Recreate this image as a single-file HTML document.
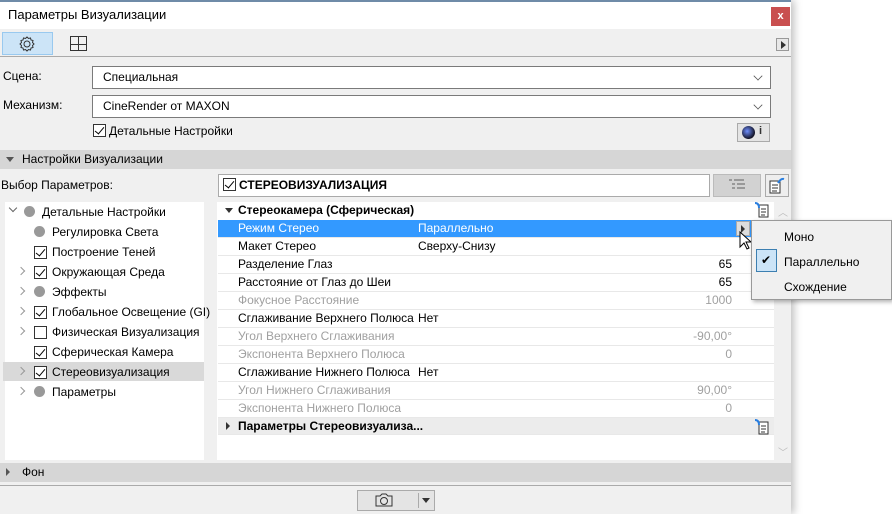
<!DOCTYPE html>
<html><head><meta charset="utf-8"><style>
*{box-sizing:border-box;margin:0;padding:0}
body{width:892px;height:514px;background:#fff;font-family:"Liberation Sans",sans-serif;font-size:12px;color:#000;position:relative;overflow:hidden}
.a{position:absolute}
.dlg{left:0;top:0;width:791px;height:514px;background:#f0f0f0;box-shadow:3px 0 8px rgba(0,0,0,.25)}
.combo{background:#fff;border:1px solid #7a7a7a;height:23px;padding:4px 10px}
.chev{position:absolute;right:8px;top:5px;width:8px;height:8px;border-right:1.3px solid #555;border-bottom:1.3px solid #555;transform:rotate(45deg) scale(.8)}
.cb{width:13px;height:13px;border:1px solid #333;background:#fff;position:absolute}
.cb.k::after{content:"";position:absolute;left:3px;top:0px;width:4px;height:8px;border-right:1.6px solid #000;border-bottom:1.6px solid #000;transform:rotate(40deg)}
.dot{width:11px;height:11px;border-radius:50%;background:#999;position:absolute}
.arr{position:absolute;width:6px;height:6px;border-right:1.3px solid #999;border-bottom:1.3px solid #999;transform:rotate(-45deg)}
.row{position:absolute;left:218px;width:556px;height:18px;border-bottom:1px solid #e8e8e8;padding:1px 0 0 20px;white-space:nowrap}
.g{color:#a0a0a0}
.v{position:absolute;left:200px;top:1px}
.n{position:absolute;right:42px;top:1px}
.t{position:absolute;white-space:nowrap}
</style></head><body>
<div class="a dlg">
 <div class="a" style="left:0;top:0;width:791px;height:29px;background:#fff;border-top:2px solid #6f8ba8"></div>
 <div class="t" style="left:8px;top:7px;font-size:13px">Параметры Визуализации</div>
 <div class="a" style="left:771px;top:7px;width:19px;height:19px;background:#c94f4f;color:#fff;font-weight:bold;font-size:11px;text-align:center;line-height:18px">x</div>
 <div class="a" style="left:2px;top:32px;width:51px;height:23px;background:#cce4f7;border:1px solid #99c9ef"></div>
 <svg class="a" style="left:18px;top:35px" width="18" height="18" viewBox="0 0 18 18"><circle cx="9" cy="9" r="3" fill="none" stroke="#333"/><path d="M9 2l1.5 1.5 2-.5.5 2 2 .5-.5 2L16 9l-1.5 1.5.5 2-2 .5-.5 2-2-.5L9 16l-1.5-1.5-2 .5-.5-2-2-.5.5-2L2 9l1.5-1.5-.5-2 2-.5.5-2 2 .5z" fill="none" stroke="#333"/></svg>
 <svg class="a" style="left:70px;top:36px" width="17" height="15"><rect x=".5" y=".5" width="16" height="14" fill="none" stroke="#333"/><path d="M8.5 1v13M1 8.5h15" stroke="#333"/></svg>
 <div class="a" style="left:776px;top:38px;width:13px;height:13px;border:1px solid #999;background:#e8e8e8"></div>
 <div class="a" style="left:781px;top:41px;border-left:5px solid #333;border-top:4px solid transparent;border-bottom:4px solid transparent"></div>
 <div class="a" style="left:0;top:56px;width:791px;height:1px;background:#aaa"></div>
 <div class="t" style="left:3px;top:69px">Сцена:</div>
 <div class="a combo" style="left:92px;top:66px;width:679px;padding-top:3px">Специальная<span class="chev"></span></div>
 <div class="t" style="left:3px;top:98px">Механизм:</div>
 <div class="a combo" style="left:92px;top:95px;width:679px;padding-top:3px">CineRender от MAXON<span class="chev"></span></div>
 <div class="cb k" style="left:93px;top:124px"></div>
 <div class="t" style="left:109px;top:124px">Детальные Настройки</div>
 <div class="a" style="left:737px;top:123px;width:33px;height:19px;border:1px solid #aaa;background:#e4e4e4"></div>
 <div class="a" style="left:742px;top:126px;width:13px;height:13px;border-radius:50%;background:radial-gradient(circle at 40% 40%,#6f8fff,#112 70%,#aaa)"></div>
 <div class="t" style="left:759px;top:125px;font-weight:bold;font-size:11px;color:#333">i</div>
 <div class="a" style="left:0;top:150px;width:791px;height:19px;background:#d6d6d6"></div>
 <div class="a" style="left:6px;top:157px;border-top:5px solid #555;border-left:4px solid transparent;border-right:4px solid transparent"></div>
 <div class="t" style="left:22px;top:152px">Настройки Визуализации</div>
 <div class="t" style="left:1px;top:178px">Выбор Параметров:</div>
 <div class="a" style="left:218px;top:174px;width:492px;height:23px;background:#fff;border:1px solid #aaa"></div>
 <div class="cb k" style="left:223px;top:178px"></div>
 <div class="t" style="left:239px;top:178px;font-weight:bold">СТЕРЕОВИЗУАЛИЗАЦИЯ</div>
 <div class="a" style="left:713px;top:174px;width:48px;height:23px;background:#d2d2d2;border:1px solid #bbb"></div>
 <svg class="a" style="left:728px;top:179px" width="18" height="13"><path d="M1 1h3M6 1h10M4 5h3M9 5h8M4 9h3M9 9h8" stroke="#999" stroke-width="2"/></svg>
 <div class="a" style="left:765px;top:174px;width:24px;height:23px;background:#eee;border:1px solid #aaa"></div>
 <svg class="a" style="left:768px;top:176px" width="18" height="18"><rect x="2" y="5" width="10" height="12" fill="#fff" stroke="#333"/><path d="M4 9h6M4 12h6M4 15h5" stroke="#333"/><path d="M10 7q3-5 6-4" stroke="#2a7fe0" stroke-width="2" fill="none"/></svg>
 <div class="a" style="left:5px;top:202px;width:199px;height:258px;background:#fff"></div>
 <div class="a" style="left:3px;top:362px;width:201px;height:19px;background:#d9d9d9"></div>
 <div class="a" style="left:10px;top:205px;width:6px;height:6px;border-right:1.3px solid #666;border-bottom:1.3px solid #666;transform:rotate(45deg)"></div>
 <div class="dot" style="left:24px;top:206px"></div><div class="t" style="left:42px;top:205px">Детальные Настройки</div>
 <div class="dot" style="left:34px;top:226px"></div><div class="t" style="left:52px;top:225px">Регулировка Света</div>
 <div class="cb k" style="left:34px;top:246px"></div><div class="t" style="left:52px;top:245px">Построение Теней</div>
 <div class="arr" style="left:18px;top:268px"></div><div class="cb k" style="left:34px;top:266px"></div><div class="t" style="left:52px;top:265px">Окружающая Среда</div>
 <div class="arr" style="left:18px;top:288px"></div><div class="dot" style="left:34px;top:286px"></div><div class="t" style="left:52px;top:285px">Эффекты</div>
 <div class="arr" style="left:18px;top:308px"></div><div class="cb k" style="left:34px;top:306px"></div><div class="t" style="left:52px;top:305px">Глобальное Освещение (GI)</div>
 <div class="arr" style="left:18px;top:328px"></div><div class="cb" style="left:34px;top:326px"></div><div class="t" style="left:52px;top:325px">Физическая Визуализация</div>
 <div class="cb k" style="left:34px;top:346px"></div><div class="t" style="left:52px;top:345px">Сферическая Камера</div>
 <div class="arr" style="left:18px;top:368px"></div><div class="cb k" style="left:34px;top:366px"></div><div class="t" style="left:52px;top:365px">Стереовизуализация</div>
 <div class="arr" style="left:18px;top:388px"></div><div class="dot" style="left:34px;top:386px"></div><div class="t" style="left:52px;top:385px">Параметры</div>
 <div class="a" style="left:217px;top:202px;width:574px;height:258px;background:#fff"></div>
 <div class="a" style="left:774px;top:202px;width:17px;height:258px;background:#f0f0f0"></div>
 <div class="row" style="top:202px;font-weight:bold;border:0">Стереокамера (Сферическая)</div>
 <div class="a" style="left:225px;top:208px;border-top:5px solid #333;border-left:4px solid transparent;border-right:4px solid transparent"></div>
 <div class="row" style="top:220px;background:#3399ff;color:#fff">Режим Стерео<span class="v">Параллельно</span></div>
 <div class="a" style="left:736px;top:221px;width:14px;height:15px;background:#ddd;border:1px solid #aaa"></div>
 <div class="a" style="left:741px;top:225px;border-left:4px solid #333;border-top:4px solid transparent;border-bottom:4px solid transparent"></div>
 <div class="row" style="top:238px">Макет Стерео<span class="v">Сверху-Снизу</span></div>
 <div class="row" style="top:256px">Разделение Глаз<span class="n">65</span></div>
 <div class="row" style="top:274px">Расстояние от Глаз до Шеи<span class="n">65</span></div>
 <div class="row g" style="top:292px">Фокусное Расстояние<span class="n">1000</span></div>
 <div class="row" style="top:310px">Сглаживание Верхнего Полюса<span class="v">Нет</span></div>
 <div class="row g" style="top:328px">Угол Верхнего Сглаживания<span class="n">-90,00°</span></div>
 <div class="row g" style="top:346px">Экспонента Верхнего Полюса<span class="n">0</span></div>
 <div class="row" style="top:364px">Сглаживание Нижнего Полюса<span class="v">Нет</span></div>
 <div class="row g" style="top:382px">Угол Нижнего Сглаживания<span class="n">90,00°</span></div>
 <div class="row g" style="top:400px">Экспонента Нижнего Полюса<span class="n">0</span></div>
 <div class="row" style="top:418px;background:#ececec;font-weight:bold;height:17px">Параметры Стереовизуализа...</div>
 <div class="a" style="left:226px;top:422px;border-left:4px solid #333;border-top:4px solid transparent;border-bottom:4px solid transparent"></div>
 <svg class="a" style="left:754px;top:201px" width="16" height="17"><rect x="5" y="4" width="9" height="12" fill="#fff" stroke="#333"/><path d="M7 8h5M7 11h5M7 14h4" stroke="#333"/><path d="M1 2q4 0 4 5" stroke="#2a7fe0" stroke-width="2" fill="none"/></svg>
 <svg class="a" style="left:754px;top:418px" width="16" height="17"><rect x="5" y="4" width="9" height="12" fill="#fff" stroke="#333"/><path d="M7 8h5M7 11h5M7 14h4" stroke="#333"/><path d="M1 2q4 0 4 5" stroke="#2a7fe0" stroke-width="2" fill="none"/></svg>
 <div class="t" style="left:778px;top:204px;color:#bbb;font-size:10px">︿</div>
 <div class="t" style="left:778px;top:444px;color:#bbb;font-size:10px">﹀</div>
 <div class="a" style="left:0;top:463px;width:791px;height:19px;background:#d6d6d6"></div>
 <div class="a" style="left:6px;top:468px;border-left:4px solid #555;border-top:4px solid transparent;border-bottom:4px solid transparent"></div>
 <div class="t" style="left:22px;top:465px">Фон</div>
 <div class="a" style="left:0;top:485px;width:791px;height:1px;background:#aaa"></div>
 <div class="a" style="left:357px;top:490px;width:78px;height:21px;background:#e4e4e4;border:1px solid #aaa"></div>
 <svg class="a" style="left:374px;top:492px" width="20" height="16"><path d="M2 4h4l2-2h4l2 2h4v10H2z" fill="none" stroke="#333"/><circle cx="10" cy="9" r="3.5" fill="none" stroke="#333"/></svg>
 <div class="a" style="left:418px;top:493px;width:1px;height:15px;background:#aaa"></div>
 <div class="a" style="left:422px;top:498px;border-top:5px solid #333;border-left:4px solid transparent;border-right:4px solid transparent"></div>
</div>
<svg class="a" style="left:739px;top:231px" width="14" height="20"><path d="M1 1v15l4-4 3 6 2-1-3-6h5z" fill="#fff" stroke="#000"/></svg>
<div class="a" style="left:751px;top:220px;width:141px;height:80px;background:#f0f0f0;border:1px solid #999;box-shadow:2px 2px 4px rgba(0,0,0,.3)"></div>
<div class="a" style="left:756px;top:249px;width:21px;height:23px;background:#cce4f7;border:1px solid #3c7fb1"></div>
<div class="t" style="left:761px;top:253px;font-size:12px">✔</div>
<div class="t" style="left:784px;top:230px">Моно</div>
<div class="t" style="left:784px;top:255px">Параллельно</div>
<div class="t" style="left:784px;top:280px">Схождение</div>
</body></html>
